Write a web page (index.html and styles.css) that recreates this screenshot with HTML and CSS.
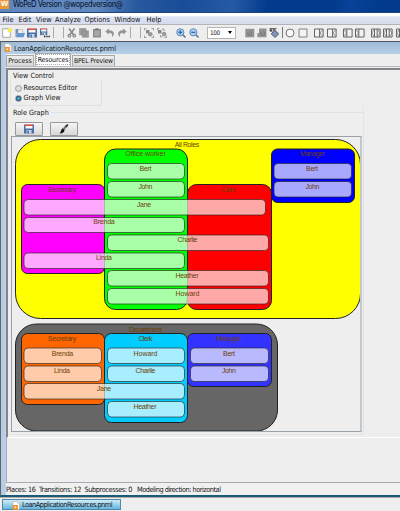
FILE: index.html
```html
<!DOCTYPE html>
<html lang="en">
<head>
<meta charset="utf-8">
<title>WoPeD</title>
<link rel="stylesheet" href="styles.css">
</head>
<body>
<svg class="defs" width="0" height="0">
  <symbol id="disk" viewBox="0 0 10 10"><path d="M0 .5h10v9H0z" fill="#496fa8"/><path d="M1.5.5h7v4h-7z" fill="#f8f8f8"/><path d="M1 .5h8v1.5H1z" fill="#e64b3c"/><path d="M2.5 6h5v3.5h-5z" fill="#c8d6e8"/><path d="M3.5 6.5h1.3v3H3.5z" fill="#355785"/></symbol>
  <symbol id="doc" viewBox="0 0 8 9"><path d="M1 .5h4L7.3 3v5.5H1z" fill="#fff" stroke="#b9a58c" stroke-width=".6"/><path d="M.8 4h5v4.7h-5z" fill="#f28c1e"/><path d="M2.3 5.4h2v1.8h-2z" fill="#ffe9c8"/><path d="M5 .5V3h2.3" fill="#ddd"/></symbol>
  <symbol id="join" viewBox="0 0 10 10"><path d="M.5 1h8.6v8H.5zM5.6 1v8" fill="#f2f2f2" stroke="#555" stroke-width=".9"/><path d="M9 1.5L6 5l3 3.500" fill="none" stroke="#777" stroke-width=".8"/></symbol>
  <symbol id="split" viewBox="0 0 10 10"><path d="M.5 1h8.600v8H.5zM3.800 1v8" fill="#f2f2f2" stroke="#555" stroke-width=".9"/><path d="M.8 1.500L3.500 5 .8 8.500" fill="none" stroke="#777" stroke-width=".8"/></symbol>
  <symbol id="both" viewBox="0 0 10 10"><path d="M.5 1h8.600v8H.5zM3.500 1v8M6.200 1v8" fill="#f2f2f2" stroke="#555" stroke-width=".9"/><path d="M3.300 1.500L.8 5l2.500 3.500M6.500 1.500L9 5 6.500 8.500" fill="none" stroke="#777" stroke-width=".8"/></symbol>
</svg>
<header class="titlebar"><span class="logo">W</span><svg class="apptitle" width="115" height="12"><text x="0" y="7.300" textLength="110">WoPeD Version @wopedversion@</text></svg></header>
<nav class="menu"><span class="m1">File</span><span class="m2">Edit</span><span class="m3">View</span><span class="m4">Analyze</span><span class="m5">Options</span><span class="m6">Window</span><span>Help</span></nav>
<div class="toolbar">
  <svg class="ic" viewBox="0 0 10 10"><path d="M.7.7h6L8.300 3v6.300H.7z" fill="#fff" stroke="#888" stroke-width=".7"/><circle cx="7.800" cy="2.300" r="2.200" fill="#f5ea55"/></svg>
  <svg class="ic g3" viewBox="0 0 10 10"><path d="M.5 1h3l1 1H8v3H2L.5 9z" fill="#7890ab"/><path d="M3 1.500h5v4H3z" fill="#eee" stroke="#999" stroke-width=".4"/><path d="M2 5h8L8.600 9.300H.5z" fill="#6798cf"/></svg>
  <svg class="ic g2"><use href="#disk"/></svg>
  <svg class="ic g3" viewBox="0 0 10 10"><use href="#disk" width="7.500" height="7.500"/><path d="M4 8.500h1.300M6.300 8.500h1.300M8.500 8.500h1.300" stroke="#111" stroke-width="1.300"/></svg>
  <i class="sep g3"></i><i class="sep g9"></i>
  <svg class="ic g3" viewBox="0 0 10 10"><path d="M2 .5l4.500 6M7.500.5L3 6.500" stroke="#888" stroke-width="1.600"/><circle cx="2.400" cy="7.700" r="1.300" fill="none" stroke="#888" stroke-width="1.200"/><circle cx="7.200" cy="7.700" r="1.300" fill="none" stroke="#888" stroke-width="1.200"/></svg>
  <svg class="ic g2" viewBox="0 0 10 10"><path d="M.5.500h6.500v6.500H.5zM3.300 2.800h6.200v6.500H3.300z" fill="#9a9a9a" stroke="#858585" stroke-width=".5"/></svg>
  <svg class="ic g3" viewBox="0 0 10 10"><path d="M1 1h8v8.500H1z" fill="#8c8c8c"/><path d="M3.300.3h3.400V2H3.300z" fill="#777"/><path d="M2.300 2.500h5.400v5.500H2.300z" fill="#a8a8a8"/></svg>
  <svg class="ic g3" viewBox="0 0 10 10"><path d="M4 .5L.3 3.500 4 6.500V4.700c2.500 0 3.500 1 3 4.500C10.500 6 9 2.200 4 2.200z" fill="#949494"/></svg>
  <svg class="ic g2" viewBox="0 0 10 10"><path d="M6 .5l3.700 3L6 6.500V4.700c-2.500 0-3.500 1-3 4.500C-.5 6 1 2.200 6 2.200z" fill="#949494"/></svg>
  <i class="sep g3"></i><i class="sep g9"></i>
  <svg class="ic g3" viewBox="0 0 10 10"><path d="M.5 2.500v-2h2M7.500.5h2v2M.5 7.500v2h2M7.500 9.500h2v-2" fill="none" stroke="#888" stroke-width=".8"/><path d="M2 2h3.500v3.500H2z" fill="#888"/><circle cx="6.300" cy="6.300" r="2.300" fill="#999"/></svg>
  <svg class="ic g3" viewBox="0 0 10 10"><path d="M.5 2.500v-2h2M5 1h2v2M3.500 7v2h2M7.500 9.500h2v-2" fill="none" stroke="#888" stroke-width=".8"/><path d="M1 2h3.500v3.500H1z" fill="#888"/><circle cx="7.100" cy="6.100" r="2.300" fill="#999"/></svg>
  <svg class="ic g9" viewBox="0 0 10 10"><path d="M6.500 6.500l3 3" stroke="#69798c" stroke-width="1.600"/><circle cx="4.300" cy="4.300" r="3.600" fill="#a9d0f3" stroke="#648bb4"/><path d="M2.300 4.300h4M4.300 2.300v4" stroke="#1c58a0" stroke-width="1.100"/></svg>
  <svg class="ic g3" viewBox="0 0 10 10"><path d="M6.500 6.500l3 3" stroke="#69798c" stroke-width="1.600"/><circle cx="4.300" cy="4.300" r="3.600" fill="#a9d0f3" stroke="#648bb4"/><path d="M2.300 4.300h4" stroke="#1c58a0" stroke-width="1.100"/></svg>
  <div class="combo"><span>100</span><b></b></div>
  <svg class="ic g9" viewBox="0 0 10 10"><path d="M.3.800h9v8.500h-9z" fill="#929292"/><path d="M3 4v3h3.500V4H5" fill="none" stroke="#777"/></svg>
  <svg class="ic g2" viewBox="0 0 10 10"><path d="M2 .5h7.500v8.800H2zM.3 5h3v4.300h-3z" fill="#929292"/><path d="M4 4v3h3.500V4H6" fill="none" stroke="#777"/></svg>
  <svg class="ic g2" viewBox="0 0 10 10"><path d="M.5.8h7M.5 2.500l3 .5M2 .8v3M5 .8v2" stroke="#333" stroke-width="1"/><path d="M5.700 2l4 3.800-3.500 3.700-4-3.500z" fill="#8094b8" stroke="#445" stroke-width=".8"/></svg>
  <i class="sep dark g3"></i>
  <svg class="ic g2" viewBox="0 0 10 10"><circle cx="5" cy="5" r="4" fill="#f8f8f8" stroke="#555" stroke-width=".8"/></svg>
  <svg class="ic g3" viewBox="0 0 10 10"><path d="M1 1h8v8H1z" fill="#f2f2f2" stroke="#666" stroke-width=".8"/></svg>
  <svg class="ic g6"><use href="#join"/></svg><svg class="ic g3"><use href="#join"/></svg>
  <svg class="ic g6"><use href="#split"/></svg><svg class="ic g2"><use href="#split"/></svg>
  <svg class="ic g6"><use href="#both"/></svg><svg class="ic g2"><use href="#both"/></svg><svg class="ic g3"><use href="#both"/></svg>
</div>
<main class="desktop">
  <div class="frametitle"><svg class="docicon"><use href="#doc"/></svg><svg width="110" height="12"><text x="0" y="8.500" textLength="102">LoanApplicationResources.pnml</text></svg></div>
  <div class="frame">
    <div class="tabs"><span class="tab t1">Process</span><span class="tab t2 on">Resources</span><span class="tab t3">BPEL Preview</span></div>
    <div class="page">
      <h2 class="vc">View Control</h2>
      <div class="radios">
        <label><i class="radio"></i>Resources Editor</label>
        <label><i class="radio sel"></i>Graph View</label>
      </div>
      <section class="rolebox">
        <h2><span>Role Graph</span></h2>
        <div class="buttons">
          <div class="btn"><svg width="10" height="10"><use href="#disk"/></svg></div>
          <div class="btn"><svg width="10" height="10" viewBox="0 0 10 10"><path d="M8 1L4.500 5.500" stroke="#876" stroke-width="2.300"/><path d="M9 .5L7 3" stroke="#333" stroke-width="1.500"/><path d="M3.500 4.300l2 2C5 9 2.500 9.500.5 9.500 2.200 8.500 1.500 6 3.500 4.300z" fill="#111"/></svg></div>
        </div>
        <div class="canvas">
          <svg class="graph" width="349" height="294" viewBox="12 137 349 294">
            <g class="role">
              <rect x="15.500" y="139.500" width="345" height="179" rx="25" fill="#ff0"/>
              <rect x="21.500" y="184.500" width="83" height="89" rx="6" fill="#f0f"/>
              <rect x="104.500" y="149" width="83" height="160.500" rx="11" fill="#0f0"/>
              <rect x="187.500" y="184.500" width="84" height="125" rx="9" fill="#f00"/>
              <rect x="271.500" y="149" width="83" height="53.500" rx="6" fill="#00f"/>
              <rect x="15.500" y="324" width="262" height="107" rx="21" fill="#666"/>
              <rect x="21.500" y="333.500" width="83" height="71" rx="6" fill="#f60"/>
              <rect x="104.500" y="333.500" width="83" height="89" rx="7" fill="#0cf"/>
              <rect x="187.500" y="333.500" width="84" height="53" rx="6" fill="#33f"/>
            </g>
            <g class="person">
              <rect x="107.500" y="163.500" width="77" height="15.500" rx="4"/>
              <rect x="107.500" y="181.500" width="77" height="15.500" rx="4"/>
              <rect x="24" y="199.500" width="241.500" height="15.500" rx="4"/>
              <rect x="24" y="217.500" width="160.500" height="15" rx="4"/>
              <rect x="107.500" y="235" width="161" height="15.500" rx="4"/>
              <rect x="24" y="253" width="160.500" height="15.500" rx="4"/>
              <rect x="107.500" y="270.500" width="161" height="15.500" rx="4"/>
              <rect x="107.500" y="288.500" width="161" height="15.500" rx="4"/>
              <rect x="274" y="163.500" width="77.500" height="15.500" rx="4"/>
              <rect x="274" y="181.500" width="77.500" height="15.500" rx="4"/>
              <rect x="24" y="348" width="77.500" height="15.500" rx="4"/>
              <rect x="24" y="366" width="77.500" height="15.500" rx="4"/>
              <rect x="24" y="383.500" width="160.500" height="15.500" rx="4"/>
              <rect x="107.500" y="348" width="77" height="15.500" rx="4"/>
              <rect x="107.500" y="366" width="77" height="15.500" rx="4"/>
              <rect x="107.500" y="383.500" width="77" height="15.500" rx="4" class="none"/>
              <rect x="107.500" y="401.500" width="77" height="15.500" rx="4"/>
              <rect x="190.500" y="348" width="78" height="15.500" rx="4"/>
              <rect x="190.500" y="366" width="78" height="15.500" rx="4"/>
            </g>
            <g class="label">
              <text x="187" y="147" textLength="24.500">All Roles</text>
              <text x="145.500" y="156" textLength="40.500">Office worker</text>
              <text x="62" y="191.500" textLength="28.500">Secretary</text>
              <text x="228.500" y="191.500" textLength="14">Clerk</text>
              <text x="312.500" y="156" textLength="25">Manager</text>
              <text x="145.500" y="171" textLength="12">Bert</text>
              <text x="145.500" y="189" textLength="14">John</text>
              <text x="144" y="206.500" textLength="14.500">Jane</text>
              <text x="104" y="224" textLength="21.500">Brenda</text>
              <text x="187.500" y="242" textLength="20">Charlie</text>
              <text x="104" y="260" textLength="16">Linda</text>
              <text x="187" y="278" textLength="23">Heather</text>
              <text x="187.500" y="295.500" textLength="24">Howard</text>
              <text x="312" y="171" textLength="12">Bert</text>
              <text x="312.500" y="189" textLength="14">John</text>
              <text x="145.500" y="331.500" textLength="33">Department</text>
              <text x="62" y="340.500" textLength="28.500">Secretary</text>
              <text x="145.500" y="340.500" textLength="14">Clerk</text>
              <text x="228.500" y="340.500" textLength="25">Manager</text>
              <text x="62.500" y="355.500" textLength="21.500">Brenda</text>
              <text x="62" y="373" textLength="16">Linda</text>
              <text x="104" y="391" textLength="14.500">Jane</text>
              <text x="145.500" y="355.500" textLength="24">Howard</text>
              <text x="145.500" y="373" textLength="20">Charlie</text>
              <text x="145" y="408.500" textLength="23">Heather</text>
              <text x="229" y="355.500" textLength="12">Bert</text>
              <text x="229" y="373" textLength="14">John</text>
            </g>
          </svg>
        </div>
      </section>
    </div>
    <div class="below"></div>
  </div>
  <footer class="status"><svg width="230" height="12"><text x="0" y="8.700" textLength="30">Places: 16</text><text x="33" y="8.700" textLength="42.500">Transitions: 12</text><text x="78.500" y="8.700" textLength="48">Subprocesses: 0</text><text x="131" y="8.700" textLength="84">Modeling direction: horizontal</text></svg></footer>
</main>
<div class="taskbar"><div class="task"><svg class="docicon"><use href="#doc"/></svg><svg width="96" height="10"><text x="0" y="6.800" textLength="90.500">LoanApplicationResources.pnml</text></svg></div></div>
</body>
</html>
```
FILE: styles.css
```css
* { box-sizing: border-box; }
body { margin: 0; width: 400px; height: 511px; overflow: hidden; background: #eee; color: #111; font: 7px/10px "DejaVu Sans Condensed", "DejaVu Sans", sans-serif; white-space: nowrap; }
svg { display: block; flex: none; }
svg text { font: 7.3px "DejaVu Sans Condensed", "DejaVu Sans", sans-serif; fill: #151515; }
.defs, .none { display: none; }
.titlebar { display: flex; height: 13px; border-bottom: 1px solid #234476; background: linear-gradient(100deg, #6086bd 0, #6289bf 95px, #28599f 135px, #1a4c98 180px, #255aa5 230px, #023a8d 265px, #023a8d 330px, #07439a 345px, #023a8d 375px); }
.logo { width: 9px; height: 9px; background: #ee9b35; color: #fff; font: bold 8px/8px "Liberation Sans", sans-serif; text-align: center; margin-right: 4px; }
.apptitle text { font-size: 8px; fill: #07101f; }
.menu { display: flex; height: 12px; padding: 1px 0 0 2.500px; background: linear-gradient(#fff 0 25%, #dfe4f4 35%, #d6dbed); border-bottom: 1px solid #b4b4b8; font-size: 7.3px; line-height: 11px; }
.menu span { flex: none; }
.m1 { width: 16px; } .m2 { width: 17.500px; } .m3 { width: 19px; } .m4 { width: 29.500px; } .m5 { width: 30px; } .m6 { width: 32px; }
.toolbar { display: flex; align-items: center; height: 17px; padding: 0 0 1px 2px; border-bottom: 1px solid #4c5560; overflow: hidden; background: #eee; }
.ic { width: 10px; height: 10px; }
.g2 { margin-left: 2px; } .g3 { margin-left: 3px; } .g6 { margin-left: 6px; } .g9 { margin-left: 9px; }
.sep { flex: none; width: 1px; height: 11px; background: #aaa; }
.dark { background: #777; }
.combo { display: flex; flex: none; align-items: center; justify-content: space-between; width: 29px; height: 12px; margin-left: 8px; padding: 0 3px 0 2px; border: 1px solid #b5b5b5; background: #fff; font-size: 6.300px; }
.combo span { letter-spacing: -.4px; }
.combo b { border: 2.500px solid transparent; border-top: 3px solid #000; border-bottom: 0; }
.desktop { height: 455px; padding-left: 5px; border-left: 1px solid #666; border-bottom: 2px solid #175b77; background: linear-gradient(90deg, #b2cbe5, #bdd0e8 5px, #b8d0e8 5px); }
.frametitle { display: flex; height: 12px; background: linear-gradient(#9dbad8, #b7d0e8); margin-left: -5px; padding-left: 2px; }
.docicon { width: 8px; height: 9px; margin: 1px 2px 0 1px; }
.frame { height: 429px; background: #eee; }
.tabs { display: flex; align-items: flex-end; height: 13px; border-bottom: 1px solid #b8b8c0; }
.tab { flex: none; height: 11px; border: 1px solid #aaa; border-bottom: 0; background: linear-gradient(#eee, #d6d6d6); display: flex; justify-content: center; font-size: 6.900px; line-height: 11px; }
.t1 { width: 28px; } .t2 { width: 36px; margin: 0 1px; } .t3 { width: 43px; font-size: 6.700px; letter-spacing: -.12px; }
.on { height: 13px; background: #fff; outline: 1px dotted #aaa; outline-offset: -2px; line-height: 12px; letter-spacing: -.1px; }
.page { height: 370px; padding: 2px 0 0 2px; border-top: 2px solid #858589; border-left: 2px solid #85858a; border-bottom: 1px solid #fff; margin-top: 1px; }
.below { height: 45px; border-left: 1px solid #a9a9b4; border-bottom: 1px solid #a9a9b4; }
h2 { margin: 0 0 0 3px; font: inherit; font-size: 7.200px; height: 8px; line-height: 8px; }
.vc { width: 40px; }
.radios { width: 92px; height: 26px; border: 1px solid #dce1e4; border-top: 0; border-radius: 0 0 3px 3px; padding: 3px 0 0 4px; }
.radios label { display: flex; align-items: center; height: 10px; font-size: 7.150px; }
.radio { width: 7px; height: 7px; border: 1px solid #999; border-radius: 50%; background: #ddd; margin-right: 1.500px; }
.sel { background: radial-gradient(circle, #49bce8 20%, #15456b 65%); }
.rolebox { width: 354px; height: 329px; border: 1px solid #e0e5e8; border-width: 0 1px 1px 0; }
.rolebox h2 { display: flex; align-items: center; padding-top: 2px; height: 11px; }
.rolebox h2::after { content: ""; flex: 1; height: 1px; margin-left: 2px; background: #dce1e4; }
.buttons { display: flex; gap: 7px; padding: 5px 0 0 5px; height: 19px; }
.btn { display: flex; align-items: center; justify-content: center; width: 28px; height: 14px; border: 1px solid #999; border-radius: 1px; background: linear-gradient(#f6f6f6, #d7d7d7); }
.canvas { width: 351px; height: 296px; margin-left: 1px; border: 1px solid #98a0a8; border-right: 2px solid #c3c8cd; overflow: hidden; }
.role rect { stroke: #222; stroke-width: 1; }
.person rect { fill: #fff; fill-opacity: .66; stroke: #222; stroke-opacity: .8; stroke-width: .8; }
.label text { font: 7px "Liberation Sans", sans-serif; fill: #6b3f08; text-anchor: middle; }
.status { height: 12px; background: #f0f0f0; }
.taskbar { height: 14px; padding: 1px 2px; background: #eee; border-top: 1px solid #b5a9a9; }
.task { display: flex; width: 119px; height: 11px; padding-left: 8px; border: 1px solid #4f87a7; background: linear-gradient(#d2ecf8, #9bd0ed 50%, #65b5df); }
```
